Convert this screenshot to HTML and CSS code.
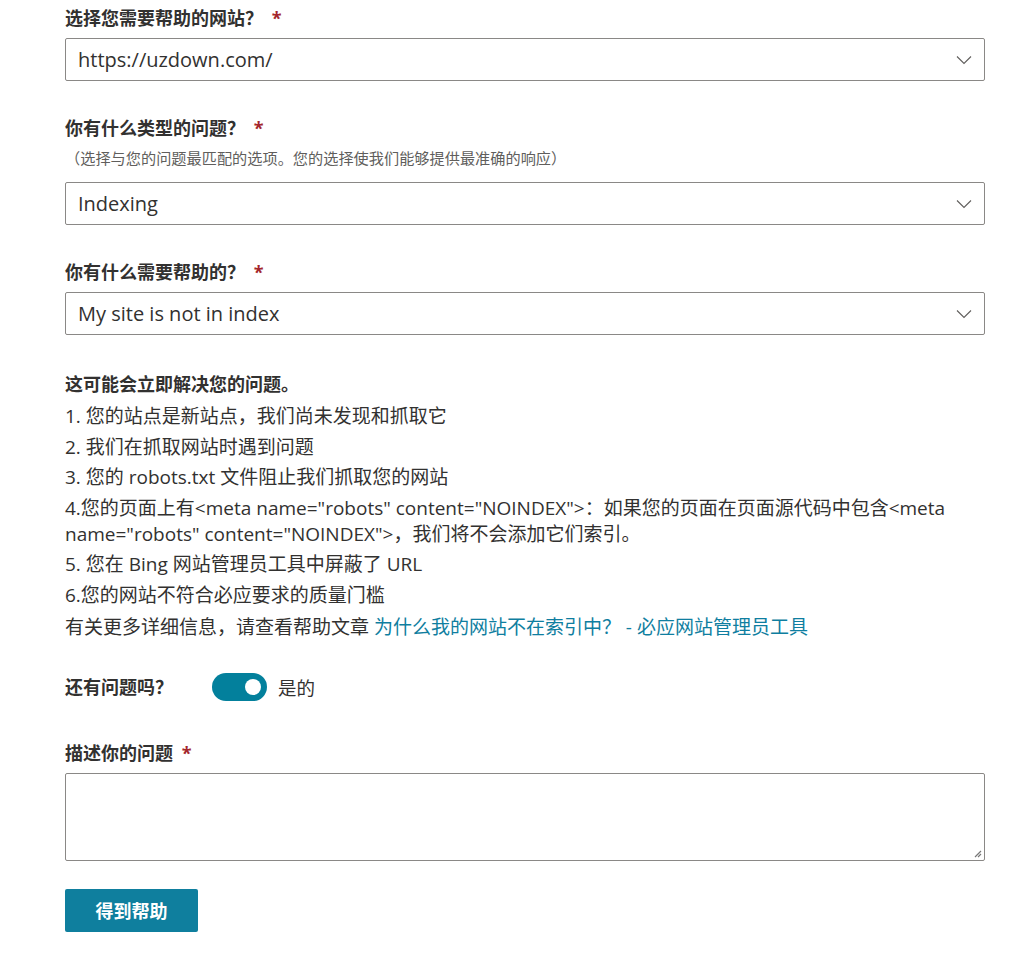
FILE: index.html
```html
<!DOCTYPE html>
<html lang="zh-CN">
<head>
<meta charset="utf-8">
<title>帮助</title>
<link rel="stylesheet" href="styles.css">
</head>
<body>
<form class="form">
  <div class="field">
    <div class="label">选择您需要帮助的网站？ <span class="req">*</span></div>
    <div class="select"><span class="value">https://uzdown.com/</span>
      <svg class="chev" viewBox="0 0 16 10" width="16" height="10"><path d="M1 1.5 L8 8.5 L15 1.5" fill="none" stroke="#605e5c" stroke-width="1.1"/></svg>
    </div>
  </div>
  <div class="field">
    <div class="label">你有什么类型的问题？ <span class="req">*</span></div>
    <div class="hint">（选择与您的问题最匹配的选项。您的选择使我们能够提供最准确的响应）</div>
    <div class="select"><span class="value">Indexing</span>
      <svg class="chev" viewBox="0 0 16 10" width="16" height="10"><path d="M1 1.5 L8 8.5 L15 1.5" fill="none" stroke="#605e5c" stroke-width="1.1"/></svg>
    </div>
  </div>
  <div class="field">
    <div class="label">你有什么需要帮助的？ <span class="req">*</span></div>
    <div class="select"><span class="value">My site is not in index</span>
      <svg class="chev" viewBox="0 0 16 10" width="16" height="10"><path d="M1 1.5 L8 8.5 L15 1.5" fill="none" stroke="#605e5c" stroke-width="1.1"/></svg>
    </div>
  </div>
  <div class="solution">
    <div class="sol-title">这可能会立即解决您的问题。</div>
    <div class="sol-list">
      <div class="item">1. 您的站点是新站点，我们尚未发现和抓取它</div>
      <div class="item">2. 我们在抓取网站时遇到问题</div>
      <div class="item">3. 您的 robots.txt 文件阻止我们抓取您的网站</div>
      <div class="item">4.您的页面上有&lt;meta name="robots" content="NOINDEX"&gt;：如果您的页面在页面源代码中包含&lt;meta name="robots" content="NOINDEX"&gt;，我们将不会添加它们索引。</div>
      <div class="item">5. 您在 Bing 网站管理员工具中屏蔽了 URL</div>
      <div class="item">6.您的网站不符合必应要求的质量门槛</div>
    </div>
    <div class="more">有关更多详细信息，请查看帮助文章 <a class="link" href="#">为什么我的网站不在索引中？ - 必应网站管理员工具</a></div>
  </div>
  <div class="toggle-row">
    <div class="label toggle-label">还有问题吗？</div>
    <div class="toggle"><span class="knob"></span></div>
    <span class="toggle-text">是的</span>
  </div>
  <div class="field last">
    <div class="label">描述你的问题 <span class="req">*</span></div>
    <div class="textarea"><svg class="grip" viewBox="0 0 10 10" width="10" height="10"><path d="M9 3 L3 9 M9 6 L6 9" stroke="#777" stroke-width="1.2" fill="none"/></svg></div>
  </div>
  <button class="btn" type="button">得到帮助</button>
</form>
</body>
</html>
```
FILE: styles.css
```css
* { box-sizing: border-box; }
body {
  margin: 0;
  background: #fff;
  color: #323130;
  font-family: "Open Sans", "Noto Sans CJK SC", sans-serif;
}
.form {
  width: 920px;
  margin-left: 65px;
  padding-top: 6px;
}
.field { margin-bottom: 35px; }
.field.last { margin-bottom: 28px; }
.label {
  font-size: 18px;
  font-weight: 700;
  line-height: 24px;
  margin-bottom: 8px;
}
.req { color: #a4262c; margin-left: 4px; }
.hint {
  font-size: 15.2px;
  line-height: 20px;
  color: #605e5c;
  margin: 3px 0 14px;
}
.select {
  height: 43px;
  border: 1px solid #8a8886;
  border-radius: 2px;
  display: flex;
  align-items: center;
  justify-content: space-between;
  padding: 0 12px 0 12px;
}
.value { font-size: 20px; }
.solution { margin-top: 37px; }
.sol-title {
  font-size: 18px;
  font-weight: 700;
  line-height: 24px;
  margin-bottom: 7px;
}
.sol-list {
  display: flex;
  flex-direction: column;
  gap: 4.5px;
  font-size: 19px;
  line-height: 26px;
}
.more {
  margin-top: 6px;
  font-size: 19px;
  line-height: 26px;
}
.link { color: #0f7ea0; text-decoration: none; }
.toggle-row {
  display: flex;
  align-items: center;
  margin-top: 33px;
  margin-bottom: 40px;
  height: 28px;
}
.toggle-label { margin-bottom: 0; width: 147px; }
.toggle {
  width: 55px;
  height: 28px;
  border-radius: 14px;
  background: #03809c;
  position: relative;
}
.knob {
  position: absolute;
  right: 6px;
  top: 6px;
  width: 16px;
  height: 16px;
  border-radius: 50%;
  background: #fff;
}
.toggle-text { margin-left: 11px; font-size: 18.5px; }
.textarea {
  height: 88px;
  border: 1px solid #8a8886;
  border-radius: 2px;
  position: relative;
}
.grip { position: absolute; right: 2px; bottom: 2px; }
.btn {
  display: block;
  width: 133px;
  height: 43px;
  border: 0;
  border-radius: 2px;
  background: #0f7f9e;
  color: #fff;
  font-family: "Open Sans", "Noto Sans CJK SC", sans-serif;
  font-size: 18px;
  font-weight: 700;
}
```
